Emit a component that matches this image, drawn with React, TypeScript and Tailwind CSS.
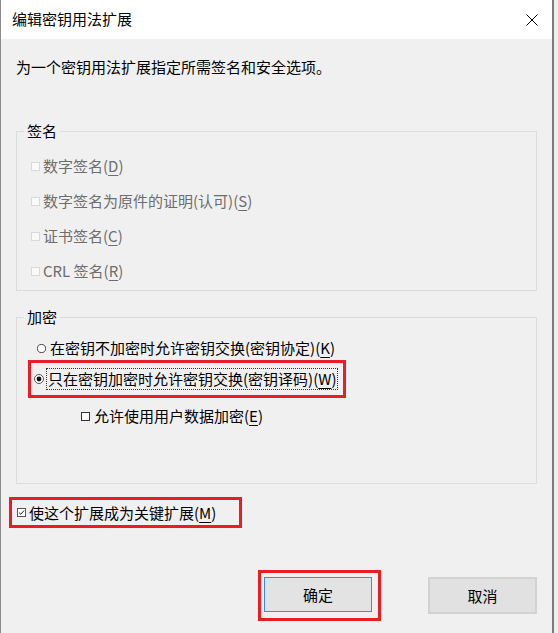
import React from "react";

function U({ c }: { c: string }) {
  return <span className="underline decoration-1 underline-offset-[3px]">{c}</span>;
}

function Box({ kind }: { kind: "disabled" | "empty" | "checked" }) {
  if (kind === "disabled") {
    return <span className="block w-[9px] h-[9px] shrink-0 border border-[#d9d9d9] bg-[#f9f9f9]" />;
  }
  if (kind === "empty") {
    return <span className="block w-[9px] h-[9px] shrink-0 border border-[#333333] bg-white" />;
  }
  return (
    <span className="flex items-center justify-center w-[9px] h-[9px] shrink-0 border border-[#555555] bg-white">
      <svg width="7" height="7" viewBox="0 0 7 7">
        <path d="M1 3.6 L2.8 5.3 L6 1.6" stroke="#222" strokeWidth="1" fill="none" />
      </svg>
    </span>
  );
}

function Radio({ checked, size }: { checked?: boolean; size: number }) {
  return (
    <svg width={size} height={size} viewBox="0 0 10 10" className="shrink-0">
      <circle cx="5" cy="5" r="4.5" fill="#fff" stroke={checked ? "#555" : "#333"} strokeWidth="1" />
      {checked && <circle cx="5" cy="5" r="2.4" fill="#111" />}
    </svg>
  );
}

export default function App() {
  return (
    <div className="flex w-[558px] h-[633px] overflow-hidden bg-[#efefef] font-['Noto_Sans_CJK_SC','Noto_Sans',sans-serif] text-[15px] leading-[20px] text-black">
      <div className="flex flex-col w-[554px] shrink-0 h-full border-l border-l-[#8c8c8c] border-r-2 border-r-[#7c7c7c] bg-[#f0f0f0]">
        {/* Title bar */}
        <div className="h-[39px] shrink-0 bg-white flex items-center justify-between pl-[11px] pr-[14px]">
          <span className="-mt-[1px]">编辑密钥用法扩展</span>
          <svg width="12" height="12" viewBox="0 0 12 12">
            <path d="M0.5 0.5 L11.5 11.5 M11.5 0.5 L0.5 11.5" stroke="#000" strokeWidth="1" />
          </svg>
        </div>

        {/* Body */}
        <div className="flex flex-col px-[15px]">
          <p className="mt-[18px]">为一个密钥用法扩展指定所需签名和安全选项。</p>

          {/* 签名 */}
          <fieldset className="mt-[44px] border border-[#dcdcdc]">
            <legend className="ml-[7px] px-[3px]">签名</legend>
            <div className="flex flex-col gap-[15px] pt-[15px] pb-[9px] pl-[14px] text-[#6d6d6d]">
              <div className="flex items-center gap-[3px]">
                <Box kind="disabled" />
                <span>数字签名(<U c="D" />)</span>
              </div>
              <div className="flex items-center gap-[3px]">
                <Box kind="disabled" />
                <span>数字签名为原件的证明(认可)(<U c="S" />)</span>
              </div>
              <div className="flex items-center gap-[3px]">
                <Box kind="disabled" />
                <span>证书签名(<U c="C" />)</span>
              </div>
              <div className="flex items-center gap-[3px]">
                <Box kind="disabled" />
                <span>CRL 签名(<U c="R" />)</span>
              </div>
            </div>
          </fieldset>

          {/* 加密 */}
          <fieldset className="mt-[16px] border border-[#dcdcdc]">
            <legend className="ml-[7px] px-[3px]">加密</legend>
            <div className="flex flex-col pt-[11px] pb-[57px]">
              <div className="flex items-center gap-[4px] pl-[20px]">
                <Radio size={9} />
                <span>在密钥不加密时允许密钥交换(密钥协定)(<U c="K" />)</span>
              </div>
              <div className="mt-[2px] ml-[11px] w-[318px] h-[38px] flex items-center pl-[3px] border-[3px] border-[#e81d25]">
                <Radio size={10} checked />
                <span className="ml-[2px] h-[22px] flex items-center px-[1px] border border-dotted border-[#333]">
                  只在密钥加密时允许密钥交换(密钥译码)(<U c="W" />)
                </span>
              </div>
              <div className="mt-[8px] flex items-center gap-[4px] pl-[64px]">
                <Box kind="empty" />
                <span>允许使用用户数据加密(<U c="E" />)</span>
              </div>
            </div>
          </fieldset>

          {/* Critical */}
          <div className="mt-[13px] -ml-[7px] w-[233px] h-[31px] flex items-center gap-[3px] pl-[5px] border-[3px] border-[#e81d25]">
            <Box kind="checked" />
            <span>使这个扩展成为关键扩展(<U c="M" />)</span>
          </div>

          {/* Buttons */}
          <div className="mt-[42px] flex items-center justify-end gap-[47px]">
            <div className="w-[123px] h-[51px] pl-[3px] pt-[4px] border-[3px] border-[#e81d25]">
              <div className="w-[108px] h-[35px] flex items-center justify-center bg-[#e3e3e3] border border-[#3a8ee0]">
                确定
              </div>
            </div>
            <div className="w-[109px] h-[37px] flex items-center justify-center bg-[#e1e1e1] border-2 border-[#d2d2d2]">
              取消
            </div>
          </div>
        </div>
      </div>
    </div>
  );
}
